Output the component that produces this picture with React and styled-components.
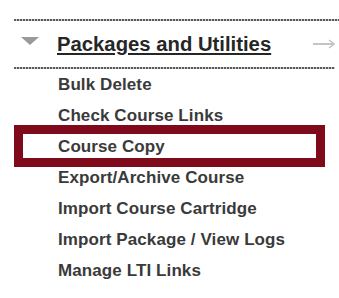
import React from 'react';
import styled, { createGlobalStyle } from 'styled-components';

const Global = createGlobalStyle`
  html, body {
    margin: 0;
    padding: 0;
    background: #fff;
  }
  body {
    font-family: "Liberation Sans", Arial, sans-serif;
  }
`;

const Panel = styled.div`
  width: 339px;
  height: 298px;
  overflow: hidden;
  padding: 19px 0 0 14px;
  box-sizing: border-box;
`;

const Dots = styled.div`
  height: 2px;
  margin-right: ${(p) => p.$trim || 0}px;
  background-image: repeating-linear-gradient(
    to right,
    #5a5a5a 0 2px,
    #c8c8c8 2px 3px
  );
`;

const Header = styled.div`
  display: flex;
  align-items: center;
  height: 46px;
`;

const Caret = styled.span`
  width: 0;
  height: 0;
  margin: -6px 18px 0 7px;
  border-left: 9px solid transparent;
  border-right: 9px solid transparent;
  border-top: 8px solid #9a9a9a;
`;

const Title = styled.a`
  flex: 1;
  font-size: 20.3px;
  font-weight: bold;
  line-height: 46px;
  color: #262626;
  text-decoration: underline;
  text-underline-offset: 2px;
  text-decoration-thickness: 2px;
`;

const Arrow = styled.svg`
  margin: 0 4px 0 0;
  flex: none;
`;

const List = styled.ul`
  list-style: none;
  margin: 0;
  padding: 0 0 0 44px;
`;

const Item = styled.li`
  position: relative;
  font-size: 17px;
  font-weight: bold;
  line-height: 31px;
  color: #3a3a3a;
  letter-spacing: 0.1px;

  ${(p) =>
    p.$marked &&
    `
    &::after {
      content: '';
      position: absolute;
      left: -44px;
      right: 14px;
      top: -6px;
      bottom: -5px;
      border: 9px solid #7f0a1c;
    }
  `}
`;

const items = [
  'Bulk Delete',
  'Check Course Links',
  'Course Copy',
  'Export/Archive Course',
  'Import Course Cartridge',
  'Import Package / View Logs',
  'Manage LTI Links',
];

export default function App() {
  return (
    <Panel>
      <Global />
      <Dots />
      <Header>
        <Caret />
        <Title>Packages and Utilities</Title>
        <Arrow width="22" height="10" viewBox="0 0 22 10">
          <line x1="0" y1="5" x2="20" y2="5" stroke="#c4c4c4" strokeWidth="2" />
          <path d="M16 1 L21 5 L16 9" fill="none" stroke="#c4c4c4" strokeWidth="1.5" />
        </Arrow>
      </Header>
      <Dots $trim={4} />
      <List>
        {items.map((t) => (
          <Item key={t} $marked={t === 'Course Copy'}>
            {t}
          </Item>
        ))}
      </List>
    </Panel>
  );
}
